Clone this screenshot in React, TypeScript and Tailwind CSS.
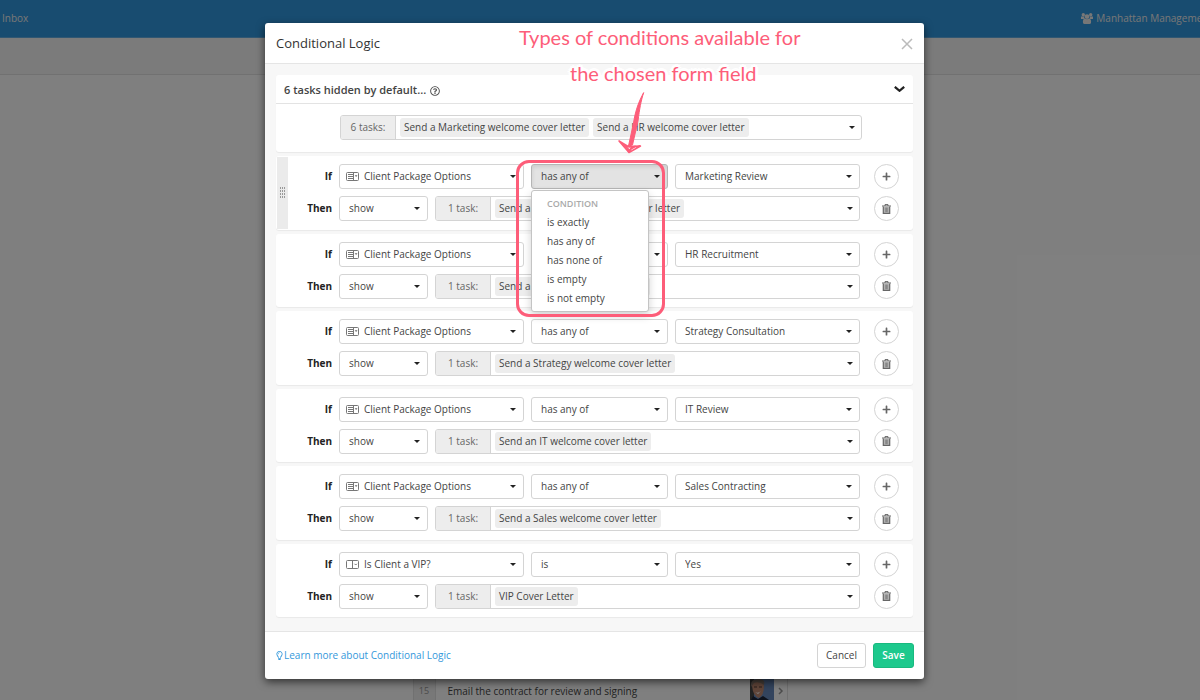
import { useState } from "react";
import type { ReactNode } from "react";
import { FaPlus, FaRegLightbulb, FaRegQuestionCircle } from "react-icons/fa";

type Rule = {
  field: string;
  multi: boolean;
  condition: string;
  value: string;
  task: string;
};

const rules: Rule[] = [
  { field: "Client Package Options", multi: true, condition: "has any of", value: "Marketing Review", task: "Send a Marketing welcome cover letter" },
  { field: "Client Package Options", multi: true, condition: "has any of", value: "HR Recruitment", task: "Send a HR welcome cover letter" },
  { field: "Client Package Options", multi: true, condition: "has any of", value: "Strategy Consultation", task: "Send a Strategy welcome cover letter" },
  { field: "Client Package Options", multi: true, condition: "has any of", value: "IT Review", task: "Send an IT welcome cover letter" },
  { field: "Client Package Options", multi: true, condition: "has any of", value: "Sales Contracting", task: "Send a Sales welcome cover letter" },
  { field: "Is Client a VIP?", multi: false, condition: "is", value: "Yes", task: "VIP Cover Letter" },
];

const conditions = ["is exactly", "has any of", "has none of", "is empty", "is not empty"];

function Caret() {
  return (
    <svg className="pointer-events-none h-[3px] w-[6px] shrink-0 text-[#222]" viewBox="0 0 6 3" fill="currentColor" aria-hidden="true">
      <path d="M0 0h6L3 3z" />
    </svg>
  );
}

function FieldIcon({ multi }: { multi: boolean }) {
  return (
    <svg className="h-[9px] w-[13px]" viewBox="0 0 13 9" fill="none" stroke="#777" aria-hidden="true">
      <rect x=".5" y=".5" width="12" height="8" rx="1" />
      {multi ? (
        <>
          <path d="M2 2.500h5M2 4.500h5M2 6.500h5" />
          <path d="M7.500 1v7" />
          <path d="M8.700 3.200h2.800l-1.400 1.800z" fill="#666" stroke="none" />
        </>
      ) : (
        <path d="M6.500 1v7M8.500 3.800l1.200 1.200 1.200-1.200" />
      )}
    </svg>
  );
}

function TrashIcon() {
  return (
    <svg className="h-[10px] w-[9px]" viewBox="0 0 9 10" fill="none" stroke="currentColor" aria-hidden="true">
      <path d="M0 2h9M3 2V.6h3V2" />
      <path d="M1.300 2.500v6.800h6.400V2.500" fill="#bbb" strokeWidth="1.200" />
      <path d="M3.300 3.500v4.600M4.500 3.500v4.600M5.700 3.500v4.600" strokeWidth=".6" />
    </svg>
  );
}

function UsersIcon() {
  return (
    <svg className="h-[11px] w-3" viewBox="0 0 12 11" fill="currentColor" aria-hidden="true">
      <circle cx="2.300" cy="1.800" r="1.700" />
      <circle cx="9.700" cy="1.800" r="1.700" />
      <circle cx="6" cy="3.600" r="2.400" />
      <path d="M0 3.600h3q0 1.600 1 2.400H0zM12 3.600H9Q9 5.200 8 6h4zM2 10q-.6-4 2-4.400 2 1.400 4 0 2.600.4 2 4.400-.4 1-1.400 1H3.400Q2.400 11 2 10z" />
    </svg>
  );
}

function Select({ label, value, className, icon }: { label: string; value: string; className: string; icon?: ReactNode }) {
  return (
    <div className={`relative ${className}`}>
      <select
        aria-label={label}
        defaultValue={value}
        className={`block h-[25px] w-full appearance-none rounded-[3px] border border-[#d4d4d4] bg-white pr-5 text-[10px] text-[#444] ${icon ? "pl-6" : "pl-[9px]"}`}
      >
        <option>{value}</option>
      </select>
      {icon && <span className="pointer-events-none absolute inset-y-0 left-[7px] flex items-center">{icon}</span>}
      <span className="pointer-events-none absolute inset-y-0 right-2 flex items-center">
        <Caret />
      </span>
    </div>
  );
}

function TaskPicker({ count, tasks }: { count: string; tasks: string[] }) {
  return (
    <div className="flex h-[25px] min-w-0 flex-1 overflow-hidden rounded-[3px] border border-[#d4d4d4] bg-white">
      <span className="flex w-[55px] shrink-0 items-center justify-center border-r border-[#d4d4d4] bg-[#ededed] text-[#666]">
        {count}
      </span>
      <button type="button" className="flex min-w-0 flex-1 items-center gap-1 pr-[6px] pl-1 text-left">
        {tasks.map((task) => (
          <span key={task} className="rounded-[3px] bg-[#ededed] px-1 leading-[19px] whitespace-nowrap">
            {task}
          </span>
        ))}
        <span className="ml-auto">
          <Caret />
        </span>
      </button>
    </div>
  );
}

function ConditionMenu() {
  const [selected, setSelected] = useState("has any of");

  return (
    <div className="relative w-[137px] shrink-0">
      <button
        type="button"
        aria-haspopup="menu"
        aria-expanded="true"
        className="flex h-[25px] w-full items-center justify-between rounded-[3px] border border-[#b5b5b5] bg-[#e3e3e3] pr-[7px] pl-[9px] shadow-[inset_0_2px_4px_rgba(0,0,0,0.1)]"
      >
        {selected}
        <Caret />
      </button>
      {/* highlight frame */}
      <div className="pointer-events-none absolute -top-1 -left-[15px] z-30 h-[157px] w-[149px] rounded-[13px] border-3 border-[#fd5d79]" />
      <div role="menu" className="absolute top-[26px] left-0 z-20 w-[118px] rounded-[3px] border border-[#c4c4c4] bg-white py-[3px] shadow-[0_4px_9px_rgba(0,0,0,0.18)]">
        <p className="px-[15px] text-[9px] leading-[19px] font-semibold text-[#aaa]">CONDITION</p>
        {conditions.map((condition) => (
          <button
            key={condition}
            type="button"
            role="menuitem"
            onClick={() => setSelected(condition)}
            className="block w-full px-[15px] text-left leading-[19px]"
          >
            {condition}
          </button>
        ))}
      </div>
    </div>
  );
}

function RoundButton({ label, children }: { label: string; children: ReactNode }) {
  return (
    <button
      type="button"
      aria-label={label}
      className="ml-[7px] flex size-[25px] shrink-0 items-center justify-center rounded-full border border-[#d4d4d4] bg-white text-[#666]"
    >
      {children}
    </button>
  );
}

function RuleCard({ rule, active }: { rule: Rule; active: boolean }) {
  return (
    <li className="flex flex-1 rounded-[3px] bg-white shadow-[0_1px_1px_rgba(0,0,0,0.06)]">
      <div className={`my-px ml-px flex w-[11px] shrink-0 items-center justify-center ${active ? "bg-[#ebebeb]" : ""}`}>
        {active && (
          <svg className="h-[11px] w-[5px]" viewBox="0 0 5 11" fill="#999" aria-hidden="true">
            <path d="M0 0h1v2H0zM2 0h1v2H2zM4 0h1v2H4zM0 3h1v2H0zM2 3h1v2H2zM4 3h1v2H4zM0 6h1v2H0zM2 6h1v2H2zM4 6h1v2H4zM0 9h1v2H0zM2 9h1v2H2zM4 9h1v2H4z" />
          </svg>
        )}
      </div>
      <div className="flex min-w-0 flex-1 flex-col justify-center gap-[7px] pr-[14px]">
        <div className="flex items-center gap-[7px]">
          <span className="w-11 shrink-0 text-right font-bold text-[#222]">If</span>
          <Select label="Form field" value={rule.field} className="min-w-0 flex-1" icon={<FieldIcon multi={rule.multi} />} />
          {active ? <ConditionMenu /> : <Select label="Condition" value={rule.condition} className="w-[137px] shrink-0" />}
          <Select label="Value" value={rule.value} className="min-w-0 flex-1" />
          <RoundButton label="Add condition">
            <FaPlus className="size-[9px]" />
          </RoundButton>
        </div>
        <div className="flex items-center gap-[7px]">
          <span className="w-11 shrink-0 text-right font-bold text-[#222]">Then</span>
          <Select label="Action" value="show" className="w-[89px] shrink-0" />
          <TaskPicker count="1 task:" tasks={[rule.task]} />
          <RoundButton label="Delete rule">
            <TrashIcon />
          </RoundButton>
        </div>
      </div>
    </li>
  );
}

function Annotation() {
  return (
    <div className="pointer-events-none absolute -top-[2px] left-[254px] z-30 w-[290px] font-['Lato',sans-serif] text-[20px] text-[#fd5d79]">
      <p className="leading-8 whitespace-nowrap">Types of conditions available for</p>
      <p className="pt-1 pl-[51px] leading-8 whitespace-nowrap [text-shadow:3px_0_#fff,-3px_0_#fff,0_3px_#fff,0_-3px_#fff,2px_2px_#fff,-2px_2px_#fff,2px_-2px_#fff,-2px_-2px_#fff]">
        the chosen form field
      </p>
      <svg className="ml-[98px] h-[66px] w-[30px]" viewBox="0 0 30 66" fill="none" stroke="currentColor" strokeLinecap="round" strokeLinejoin="round" aria-hidden="true">
        <path d="M26.500 4C24 12 22.500 20 21 32L15.500 56l-4 1L16.500 34C18.500 21 22 12 26.500 4z" fill="currentColor" />
        <path d="M2 52l10 11.500L23.500 57l-13 .5L2 52l10 6 11-1" strokeWidth="1.500" />
        <path d="M6 55.500l6 5.500 6-3.500M9 57l3 6 3-5" strokeWidth="2" />
      </svg>
    </div>
  );
}

export default function App() {
  return (
    <div className="relative min-h-screen bg-white font-['Open_Sans',sans-serif] text-[10px] text-[#444]">
      <div className="flex h-screen flex-col overflow-hidden">
        <header className="flex h-[38px] shrink-0 items-center justify-between border-b border-[#62afe5] bg-[#3098e0] text-[#eee]">
          <a href="#inbox" className="pl-[2px]">Inbox</a>
          <a href="#organization" className="-mr-3 flex items-center gap-[3px] font-medium whitespace-nowrap">
            <UsersIcon />
            Manhattan Management
          </a>
        </header>
        <div className="h-[37px] shrink-0 border-b border-[#e2e2e2] bg-[#f6f6f6]" />
        <main className="flex flex-1 flex-col justify-end">
          <div className="mx-auto flex h-[22px] w-full max-w-[375px] items-center border-x border-[#e2e2e2] bg-white">
            <span className="flex h-full w-[22px] items-center justify-center border-r border-[#e2e2e2] bg-[#f0f0f0] pt-1 text-[9px] text-[#999]">15</span>
            <span className="flex-1 pt-1 pl-3">Email the contract for review and signing</span>
            <svg className="h-[22px] w-6" viewBox="0 0 24 22" aria-hidden="true">
              <path d="M0 0h24v22H0z" fill="#6689bd" />
              <path d="M0 0h4v22H0z" fill="#444" />
              <path d="M1 22l2-4 5 3 5-3 6 4z" fill="#1c2438" />
              <path d="M2 8Q2 2 8 2t6 6q0 9-5 12-6-2-7-12z" fill="#c08a72" />
              <path d="M1 9Q0 1 8 1t6 6Q9 3 4 5z" fill="#8a7a70" />
              <path d="M4 9h3M9 9h3" stroke="#5a3c32" />
              <path d="M5 14q3 2 6-1l-3 3z" fill="#fff" />
            </svg>
            <svg className="mt-1 h-2 w-[13px]" viewBox="0 0 13 8" fill="none" stroke="#999" strokeWidth="1.500" aria-hidden="true">
              <path d="M5 1l3 3-3 3" />
            </svg>
          </div>
        </main>
      </div>

      <div className="absolute inset-0 flex bg-black/50 pt-[23px] pr-[11px] pb-[21px]">
        <form
          role="dialog"
          aria-labelledby="dialog-title"
          onSubmit={(e) => e.preventDefault()}
          className="relative mx-auto flex w-full max-w-[659px] flex-col rounded-[3px] bg-white shadow-[0_3px_9px_rgba(0,0,0,0.6)]"
        >
          <div className="flex h-[41px] shrink-0 items-center justify-between border-b border-[#e5e5e5] px-[11px] pt-[2px]">
            <h1 id="dialog-title" className="text-[13px] text-[#333]">Conditional Logic</h1>
            <button type="button" aria-label="Close" className="text-[#bbb]">
              <svg className="size-3" viewBox="0 0 12 12" stroke="currentColor" strokeWidth="1.500" aria-hidden="true">
                <path d="M1 1l10 10M11 1L1 11" />
              </svg>
            </button>
          </div>

          <div className="flex flex-1 flex-col gap-1 bg-[#f7f7f7] px-[11px] pt-[11px] pb-[14px]">
            <section className="h-[77px] shrink-0 rounded-[3px] bg-white shadow-[0_1px_1px_rgba(0,0,0,0.06)]">
              <div className="flex h-[29px] items-center border-b border-[#e3e3e3] px-2 pt-[3px]">
                <h2 className="text-[11px] font-semibold text-[#444]">6 tasks hidden by default...</h2>
                <FaRegQuestionCircle className="ml-1 size-[10px] text-[#555]" />
                <button type="button" aria-label="Collapse" className="ml-auto pb-1 text-[#222]">
                  <svg className="h-[6px] w-[11px]" viewBox="0 0 11 6" fill="none" stroke="currentColor" strokeWidth="2.200" aria-hidden="true">
                    <path d="M.8.8l4.700 4L10.200.8" />
                  </svg>
                </button>
              </div>
              <div className="flex pt-[11px] pr-[51px] pl-16">
                <TaskPicker count="6 tasks:" tasks={["Send a Marketing welcome cover letter", "Send a HR welcome cover letter"]} />
              </div>
            </section>

            <ul className="flex flex-1 flex-col gap-1">
              {rules.map((rule, i) => (
                <RuleCard key={i} rule={rule} active={i === 0} />
              ))}
            </ul>
          </div>

          <div className="flex h-12 shrink-0 items-center border-t border-[#e5e5e5] px-[10px]">
            <a href="#learn-more" className="flex items-center text-[#3498db]">
              <FaRegLightbulb className="size-[9px]" />
              Learn more about Conditional Logic
            </a>
            <button type="button" className="ml-auto h-[25px] w-[49px] rounded-[3px] border border-[#d4d4d4] bg-white">
              Cancel
            </button>
            <button type="submit" className="ml-[7px] h-[25px] w-[41px] rounded-[3px] border border-[#19b97f] bg-[#1dc98d] font-semibold text-white">
              Save
            </button>
          </div>

          <Annotation />
        </form>
      </div>
    </div>
  );
}
